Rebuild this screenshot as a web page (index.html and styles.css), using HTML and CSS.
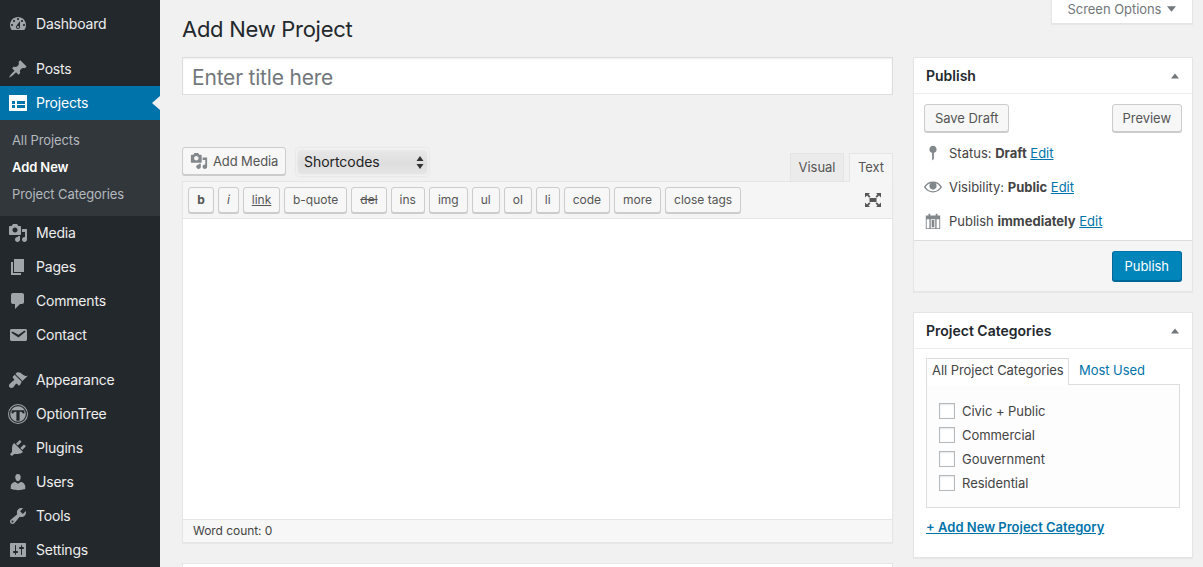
FILE: index.html
```html
<!DOCTYPE html>
<html lang="en">
<head>
<meta charset="utf-8">
<title>Add New Project</title>
<link rel="stylesheet" href="styles.css">
</head>
<body>
<div class="layout">
  <nav class="sidebar">
    <ul class="menu">
      <li class="item"><svg class="ico" viewBox="0 0 20 20"><path fill-rule="evenodd" d="M3.76 16h12.48c1.1-1.37 1.76-3.11 1.76-5 0-4.42-3.58-8-8-8s-8 3.58-8 8c0 1.89.66 3.63 1.76 5zM10 4c.55 0 1 .45 1 1s-.45 1-1 1-1-.45-1-1 .45-1 1-1zM6 6c.55 0 1 .45 1 1s-.45 1-1 1-1-.45-1-1 .45-1 1-1zm8 0c.55 0 1 .45 1 1s-.45 1-1 1-1-.45-1-1 .45-1 1-1zm-5.37 5.55L12 7v6c0 1.1-.9 2-2 2s-2-.9-2-2c0-.57.24-1.08.63-1.45zM4 10c.55 0 1 .45 1 1s-.45 1-1 1-1-.45-1-1 .45-1 1-1zm12 0c.55 0 1 .45 1 1s-.45 1-1 1-1-.45-1-1 .45-1 1-1zm-5 3c0-.55-.45-1-1-1s-1 .45-1 1 .45 1 1 1 1-.45 1-1z"/></svg><span>Dashboard</span></li>
      <li class="sep"></li>
      <li class="item"><svg class="ico" viewBox="0 0 20 20"><path d="M10.44 3.02l1.82-1.82 6.36 6.35-1.83 1.82c-1.05-.68-2.48-.57-3.41.36l-.75.75c-.92.93-1.04 2.35-.35 3.41l-1.83 1.82-2.41-2.41-2.8 2.79c-.42.42-3.38 2.71-3.8 2.29s1.86-3.39 2.28-3.81l2.79-2.79L4.1 9.36l1.83-1.82c1.05.69 2.48.57 3.4-.36l.75-.75c.93-.92 1.05-2.35.36-3.41z"/></svg><span>Posts</span></li>
      <li class="item active"><svg class="ico" viewBox="0 0 20 20"><path fill-rule="evenodd" d="M1 2h18v16H1zM4 8v3h3V8zM9 8v3h8V8zM4 12v3h3v-3zM9 12v3h8v-3z"/></svg><span>Projects</span></li>
      <li class="sub">
        <a class="sub-link">All Projects</a>
        <a class="sub-link current">Add New</a>
        <a class="sub-link">Project Categories</a>
      </li>
      <li class="item"><svg class="ico" viewBox="0 0 20 20"><path fill-rule="evenodd" d="M13 11V4c0-.55-.45-1-1-1h-1.67L9 1H5L3.67 3H2c-.55 0-1 .45-1 1v7c0 .55.45 1 1 1h10c.55 0 1-.45 1-1zM7 4.5c1.38 0 2.5 1.12 2.5 2.5S8.38 9.5 7 9.5 4.5 8.38 4.5 7 5.62 4.5 7 4.5zM14 6h5v10.5c0 1.38-1.12 2.5-2.5 2.5S14 17.88 14 16.5s1.12-2.5 2.5-2.5c.17 0 .34.02.5.05V9h-3V6zm-4 8.05V13h2v3.5c0 1.38-1.12 2.5-2.5 2.5S7 17.88 7 16.5 8.12 14 9.5 14c.17 0 .34.02.5.05z"/></svg><span>Media</span></li>
      <li class="item"><svg class="ico" viewBox="0 0 20 20"><path d="M6 15V2h10v13H6zm-1 1h8v2H3V5h2v11z"/></svg><span>Pages</span></li>
      <li class="item"><svg class="ico" viewBox="0 0 20 20"><path d="M5 2h9c1.1 0 2 .9 2 2v7c0 1.1-.9 2-2 2h-2l-5 5v-5H5c-1.1 0-2-.9-2-2V4c0-1.1.9-2 2-2z"/></svg><span>Comments</span></li>
      <li class="item"><svg class="ico" viewBox="0 0 20 20"><path d="M3.87 4h13.25C18.37 4 19 4.59 19 5.79v8.42c0 1.19-.63 1.79-1.88 1.79H3.87c-1.25 0-1.88-.6-1.88-1.79V5.79c0-1.2.63-1.79 1.88-1.79zm6.62 8.6l6.74-5.53c.24-.2.43-.66.13-1.07-.29-.41-.82-.42-1.17-.17l-5.7 3.86L4.8 6.83c-.35-.25-.88-.24-1.17.17-.3.41-.11.87.13 1.07z"/></svg><span>Contact</span></li>
      <li class="sep"></li>
      <li class="item"><svg class="ico" viewBox="0 0 20 20"><path d="M14.48 11.06L7.41 3.99l1.5-1.5c.5-.56 2.3-.47 3.51.32 1.21.8 1.43 1.28 2.91 2.1 1.18.64 2.45 1.26 4.45.85zm-.71.71L6.7 4.7 4.93 6.47c-.39.39-.39 1.02 0 1.41l1.06 1.06c.39.39.39 1.03 0 1.42-.6.6-1.43 1.11-2.21 1.69-.35.26-.7.53-1.01.84C1.43 13.73 1 14.72 1 15.32s.01 1.33.57 1.85c.56.52 1.34.83 2.12.83.61 0 1.15-.3 1.63-.7.31-.31.58-.66.84-1.01.58-.78 1.09-1.61 1.69-2.21.39-.39 1.03-.39 1.42 0l1.06 1.06c.39.39 1.02.39 1.41 0z"/></svg><span>Appearance</span></li>
      <li class="item"><svg class="ico" viewBox="0 0 20 20"><path fill-rule="evenodd" d="M10 0a10 10 0 1 0 0 20a10 10 0 1 0 0-20zM10 1a9 9 0 1 1 0 18a9 9 0 1 1 0-18zM10 2.2a7.8 7.8 0 1 0 0 15.6a7.8 7.8 0 1 0 0-15.6zM3.6 6.2h12.8v3.300h-1.400c-.8-1.300-1.800-1.700-3.400-1.700v9h-3.200v-9c-1.600 0-2.600.4-3.400 1.700h-1.400z"/></svg><span>OptionTree</span></li>
      <li class="item"><svg class="ico" viewBox="0 0 20 20"><path d="M13.11 4.36L9.87 7.6 8 5.73l3.24-3.24c.35-.34 1.05-.2 1.56.32.52.51.66 1.21.31 1.55zm-8 1.77l.91-1.12 9.01 9.01-1.19.84c-.71.71-2.63 1.16-3.82 1.16H6.14L4.9 17.26c-.59.59-1.54.59-2.12 0-.59-.58-.59-1.53 0-2.12l1.24-1.24v-3.88c0-1.13.4-3.19 1.09-3.89zm7.26 3.97l3.24-3.24c.34-.35 1.04-.21 1.55.31.52.51.66 1.21.31 1.55l-3.24 3.25z"/></svg><span>Plugins</span></li>
      <li class="item"><svg class="ico" viewBox="0 0 20 20"><path d="M10 9.25c-2.27 0-2.73-3.44-2.73-3.44C7 4.02 7.82 2 9.97 2c2.16 0 2.98 2.02 2.71 3.81 0 0-.41 3.44-2.68 3.44zm0 2.57L12.72 10c2.39 0 4.52 2.33 4.52 4.53v2.49s-3.65 1.13-7.24 1.13c-3.65 0-7.24-1.13-7.24-1.13v-2.49c0-2.25 1.94-4.48 4.47-4.48z"/></svg><span>Users</span></li>
      <li class="item"><svg class="ico" viewBox="0 0 20 20"><path fill-rule="evenodd" d="M16.68 9.77c-1.34 1.34-3.3 1.67-4.95.99l-5.41 6.52c-.99.99-2.59.99-3.58 0s-.99-2.59 0-3.57l6.52-5.42c-.68-1.65-.35-3.61.99-4.95 1.28-1.28 3.12-1.62 4.72-1.06l-2.89 2.89 2.82 2.82 2.86-2.87c.53 1.58.18 3.39-1.08 4.65zM3.81 16.21c.4.39 1.04.39 1.43 0 .4-.4.4-1.04 0-1.43-.39-.4-1.03-.4-1.43 0-.39.39-.39 1.03 0 1.43z"/></svg><span>Tools</span></li>
      <li class="item"><svg class="ico" viewBox="0 0 20 20"><path fill-rule="evenodd" d="M18 16V4c0-.55-.45-1-1-1H3c-.55 0-1 .45-1 1v12c0 .55.45 1 1 1h14c.55 0 1-.45 1-1zM8 11h1c.55 0 1 .45 1 1s-.45 1-1 1H8v1.500c0 .28-.22.5-.5.5s-.5-.22-.5-.5V13H6c-.55 0-1-.45-1-1s.45-1 1-1h1V5.500c0-.28.22-.5.5-.5s.5.22.5.5V11zm5-2h-1c-.55 0-1-.45-1-1s.45-1 1-1h1V5.500c0-.28.22-.5.5-.5s.5.22.5.5V7h1c.55 0 1 .45 1 1s-.45 1-1 1h-1v5.500c0 .28-.22.5-.5.5s-.5-.22-.5-.5V9z"/></svg><span>Settings</span></li>
    </ul>
  </nav>
  <main class="main">
    <header class="top">
      <h1 class="title">Add New Project</h1>
      <div class="screen-tab">Screen Options <svg class="tri" viewBox="0 0 10 6"><path d="M0 0h10L5 6z"/></svg></div>
    </header>
    <div class="columns">
      <section class="left">
        <input class="title-input" type="text" placeholder="Enter title here">
        <div class="media-row">
          <button class="btn media-btn"><svg class="media-ico" viewBox="0 0 20 20"><path fill-rule="evenodd" d="M13 11V4c0-.55-.45-1-1-1h-1.67L9 1H5L3.67 3H2c-.55 0-1 .45-1 1v7c0 .55.45 1 1 1h10c.55 0 1-.45 1-1zM7 4.5c1.38 0 2.5 1.12 2.5 2.5S8.38 9.5 7 9.5 4.5 8.38 4.5 7 5.62 4.5 7 4.5zM14 6h5v10.5c0 1.38-1.12 2.5-2.5 2.5S14 17.88 14 16.5s1.12-2.5 2.5-2.5c.17 0 .34.02.5.05V9h-3V6zm-4 8.05V13h2v3.5c0 1.38-1.12 2.5-2.5 2.5S7 17.88 7 16.5 8.12 14 9.5 14c.17 0 .34.02.5.05z"/></svg>Add Media</button>
          <div class="select">Shortcodes<svg class="updown" viewBox="0 0 8 13"><path d="M4 0l3.5 5h-7zM4 13L.5 8h7z"/></svg></div>
          <div class="tabs">
            <span class="tab">Visual</span>
            <span class="tab on">Text</span>
          </div>
        </div>
        <div class="editor">
          <div class="toolbar">
            <button class="qt b">b</button>
            <button class="qt i">i</button>
            <button class="qt u">link</button>
            <button class="qt">b-quote</button>
            <button class="qt s">del</button>
            <button class="qt">ins</button>
            <button class="qt">img</button>
            <button class="qt">ul</button>
            <button class="qt">ol</button>
            <button class="qt">li</button>
            <button class="qt">code</button>
            <button class="qt">more</button>
            <button class="qt">close tags</button>
            <svg class="expand" viewBox="0 0 16 14"><path d="M0 0h5L3.5 1.5 5.5 3.6 4.2 4.7 2 2.6 0 4.5zM16 0h-5l1.5 1.5-2 2.1 1.3 1.1L14 2.6l2 1.900zM0 14h5l-1.5-1.5 2-2.100-1.300-1.100L2 11.400 0 9.500zM16 14h-5l1.500-1.500-2-2.100 1.300-1.100 2.200 2.100 2-1.900zM4.500 5h7v4h-7z"/></svg>
          </div>
          <div class="canvas"></div>
          <div class="wordcount">Word count: 0</div>
        </div>
        <div class="next-box"></div>
      </section>
      <aside class="right">
        <section class="box">
          <h2 class="box-head">Publish <svg class="up" viewBox="0 0 10 6"><path d="M5 0l5 6H0z"/></svg></h2>
          <div class="pub-actions">
            <button class="btn">Save Draft</button>
            <button class="btn">Preview</button>
          </div>
          <div class="pub-rows">
            <div class="pub-row"><svg class="pub-ico" viewBox="0 0 20 20"><path fill-rule="evenodd" d="M14 6c0 1.86-1.28 3.41-3 3.86V16c0 1-2 2-2 2V9.86c-1.72-.45-3-2-3-3.86 0-2.21 1.79-4 4-4s4 1.79 4 4z"/></svg><span>Status: <b>Draft</b> <a class="link">Edit</a></span></div>
            <div class="pub-row"><svg class="pub-ico" viewBox="0 0 20 20"><path fill-rule="evenodd" d="M19.7 9.4C17.7 6 14 3.9 10 3.9S2.3 6 .3 9.4L0 10l.3.6c2 3.4 5.7 5.5 9.7 5.5s7.7-2.100 9.7-5.500l.3-.600-.3-.600zM10 14.700c-3.300 0-6.400-1.700-8.200-4.700C3.100 7.800 5.200 6.300 7.500 5.500 6.600 6.300 6 7.600 6 9c0 2.200 1.800 4 4 4s4-1.800 4-4c0-1.400-.6-2.700-1.500-3.500 2.300.8 4.400 2.300 5.700 4.500-1.800 3-4.900 4.700-8.200 4.700z"/></svg><span>Visibility: <b>Public</b> <a class="link">Edit</a></span></div>
            <div class="pub-row"><svg class="pub-ico" viewBox="0 0 20 20"><path fill-rule="evenodd" d="M2 4h3V2h2v2h6V2h2v2h3v15H2zM3 8v10h3V8zM7.500 8v10h5V8zM14 8v10h3V8zM8.500 9h3v8h-3z"/></svg><span>Publish <b>immediately</b> <a class="link">Edit</a></span></div>
          </div>
          <div class="pub-foot"><button class="btn primary">Publish</button></div>
        </section>
        <section class="box">
          <h2 class="box-head">Project Categories <svg class="up" viewBox="0 0 10 6"><path d="M5 0l5 6H0z"/></svg></h2>
          <div class="cat-body">
            <div class="cat-tabs">
              <span class="cat-tab on">All Project Categories</span>
              <a class="cat-tab link-plain">Most Used</a>
            </div>
            <div class="cat-panel">
              <label class="cat-row"><span class="check"></span>Civic + Public</label>
              <label class="cat-row"><span class="check"></span>Commercial</label>
              <label class="cat-row"><span class="check"></span>Gouvernment</label>
              <label class="cat-row"><span class="check"></span>Residential</label>
            </div>
            <a class="link add-cat">+ Add New Project Category</a>
          </div>
        </section>
      </aside>
    </div>
  </main>
</div>
</body>
</html>
```
FILE: styles.css
```css
* { box-sizing: border-box; }
html, body { margin: 0; height: 567px; overflow: hidden; }
body { background: #f1f1f1; color: #444; font: 13px/20px Inter, Roboto, "Liberation Sans", sans-serif; letter-spacing: -.05px; }
button { font: inherit; letter-spacing: inherit; }
.layout { display: flex; height: 567px; overflow: hidden; }

.sidebar { width: 160px; flex: none; background: #23282d; padding-top: 7px; }
.menu { list-style: none; margin: 0; padding: 0; }
.item { height: 34px; display: flex; align-items: center; padding-left: 8px; color: #eee; font-size: 14px; letter-spacing: -.2px; }
.item span { margin-left: 8px; }
.ico { width: 20px; height: 20px; fill: #a0a5aa; flex: none; }
.sep { height: 11px; }
.active { background: #0073aa; color: #fff; position: relative; }
.active .ico { fill: #fff; }
.active::after { content: ""; position: absolute; right: 0; top: 10px; border: 7px solid transparent; border-right: 8px solid #f1f1f1; border-left-width: 0; }
.sub { background: #32373c; padding: 7px 0 8px; }
.sub-link { display: block; height: 27px; line-height: 27px; padding-left: 12px; color: #b4b9be; letter-spacing: -.1px; }
.sub-link.current { color: #fff; font-weight: 600; }

.main { flex: 1; min-width: 0; padding: 0 10px 0 22px; }
.top { height: 57px; display: flex; justify-content: space-between; align-items: flex-start; }
.title { margin: 0; padding-top: 14px; font-size: 22px; line-height: 30px; font-weight: 400; color: #23282d; letter-spacing: -.28px; }
.screen-tab { width: 142px; height: 24px; background: #fff; border: 1px solid #e5e5e5; border-top: 0; box-shadow: 0 1px 1px rgba(0,0,0,.04); color: #72777c; display: flex; align-items: center; justify-content: center; gap: 6px; padding-bottom: 5px; }
.tri { width: 9px; height: 6px; fill: #72777c; }

.columns { display: grid; grid-template-columns: 711px 280px; column-gap: 20px; align-items: start; }

.title-input { display: block; width: 100%; height: 38px; padding: 5px 9px 3px; border: 1px solid #ddd; background: #fff; font: 21px Inter, Roboto, sans-serif; letter-spacing: -.2px; box-shadow: inset 0 1px 2px rgba(0,0,0,.07); outline: 0; }
.title-input::placeholder { color: #72777c; opacity: 1; }

.media-row { margin-top: 52px; height: 34px; display: flex; align-items: flex-start; }
.btn { height: 28px; padding: 0 10px; border: 1px solid #ccc; border-radius: 3px; background: #f7f7f7; box-shadow: 0 1px 0 #ccc; color: #555; white-space: nowrap; display: inline-flex; align-items: center; }
.media-btn { width: 104px; padding: 0 7px; letter-spacing: -.12px; }
.media-ico { width: 18px; height: 18px; fill: #82878c; margin-right: 5px; flex: none; }
.select { margin: 1px 0 0 10px; width: 133px; height: 28px; border-radius: 4px; background: linear-gradient(#e9e9e9, #dedede 55%, #e6e6e6); box-shadow: inset 0 0 3px 1px #f8f8f8, 0 0 2px #d5d5d5; display: flex; align-items: center; justify-content: space-between; padding: 0 5px 0 8px; color: #222; font-size: 14px; }
.updown { width: 8px; height: 13px; fill: #333; }
.tabs { margin: 6px 0 0 auto; display: flex; gap: 5px; align-items: flex-end; position: relative; z-index: 1; }
.tab { width: 54px; height: 28px; text-align: center; line-height: 27px; background: #ebebeb; border: 1px solid #e5e5e5; border-bottom: 0; color: #555; }
.tab.on { width: 44px; height: 29px; margin-bottom: -1px; background: #f5f5f5; }

.editor { border: 1px solid #e5e5e5; background: #fff; box-shadow: 0 1px 1px rgba(0,0,0,.04); }
.toolbar { height: 37px; background: #f5f5f5; border-bottom: 1px solid #e5e5e5; padding: 5px 5px 0; display: flex; align-items: flex-start; gap: 4px; }
.qt { height: 26px; padding: 0 8px; border: 1px solid #ccc; border-radius: 3px; background: #f7f7f7; box-shadow: 0 1px 0 #ccc; color: #555; font-size: 12px; letter-spacing: 0; }
.qt.b { font-weight: 700; width: 26px; }
.qt.i { font-style: italic; width: 21px; padding: 0; }
.qt.u { text-decoration: underline; width: 37px; padding: 0; }
.qt.s { text-decoration: line-through; }
.expand { width: 16px; height: 14px; margin: 6px 6px 0 auto; fill: #555; }
.canvas { height: 300px; background: #fff; }
.wordcount { height: 23px; line-height: 22px; padding-left: 10px; background: #f7f7f7; border-top: 1px solid #e5e5e5; font-size: 12px; color: #444; }
.next-box { height: 30px; margin-top: 20px; background: #fff; border: 1px solid #e5e5e5; }

.box { background: #fff; border: 1px solid #e5e5e5; box-shadow: 0 1px 1px rgba(0,0,0,.04); margin-bottom: 20px; }
.box-head { margin: 0; height: 36px; padding: 0 12px; border-bottom: 1px solid #eee; display: flex; align-items: center; justify-content: space-between; font-size: 14px; font-weight: 600; color: #23282d; letter-spacing: 0; }
.up { width: 8px; height: 6px; fill: #72777c; margin-right: 1px; }
.pub-actions { display: flex; justify-content: space-between; padding: 10px 10px 4px; }
.pub-rows { display: flex; flex-direction: column; padding-bottom: 2px; }
.pub-row { height: 34px; display: flex; align-items: center; padding-left: 10px; letter-spacing: 0; }
.pub-ico { width: 18px; height: 18px; fill: #82878c; margin-right: 7px; flex: none; }
.link { color: #0073aa; text-decoration: underline; }
.pub-foot { display: flex; justify-content: flex-end; padding: 10px; background: #f5f5f5; border-top: 1px solid #ddd; }
.btn.primary { height: 30px; padding: 0 12px; background: #0085ba; border-color: #0073aa #006799 #006799; box-shadow: 0 1px 0 #006799; color: #fff; }

.cat-body { padding: 9px 12px 20px; }
.cat-tabs { display: flex; height: 26px; white-space: nowrap; }
.cat-tab { padding: 0 5px; line-height: 23px; position: relative; }
.cat-tab.on { width: 143px; border: 1px solid #ddd; border-bottom: 0; height: 27px; background: #fff; z-index: 1; color: #444; }
.link-plain { color: #0073aa; padding-left: 10px; line-height: 24px; }
.cat-panel { height: 124px; border: 1px solid #ddd; background: #fdfdfd; padding: 18px 12px 0; display: flex; flex-direction: column; gap: 8px; }
.cat-row { height: 16px; display: flex; align-items: center; }
.check { width: 16px; height: 16px; margin-right: 7px; background: #fff; border: 1px solid #b4b9be; box-shadow: inset 0 1px 2px rgba(0,0,0,.1); flex: none; }
.add-cat { display: block; margin-top: 9px; font-weight: 600; letter-spacing: 0; }
```
